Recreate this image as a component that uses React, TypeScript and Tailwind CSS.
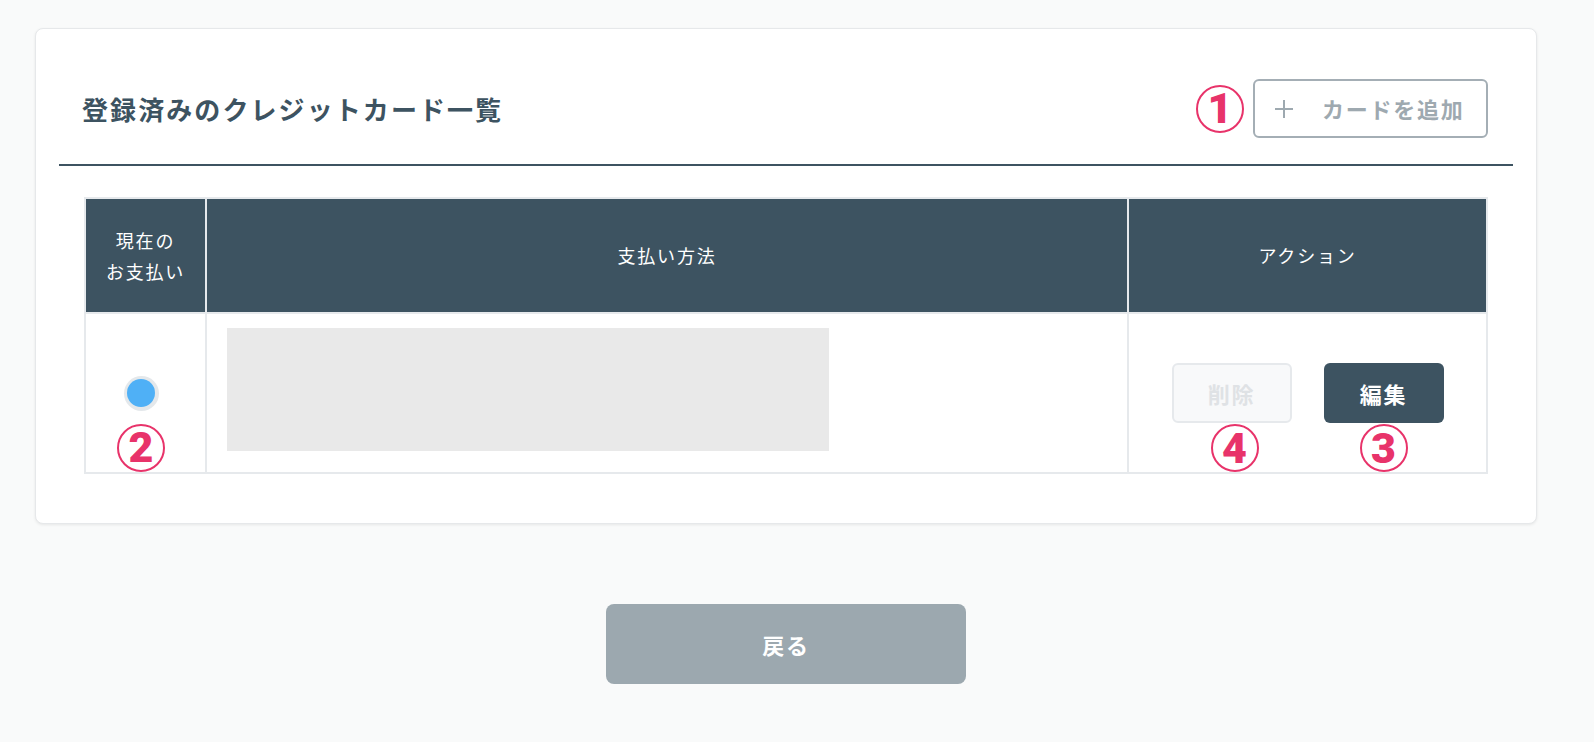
import React from 'react';

const jp = "font-['Noto_Sans_CJK_JP','Noto_Sans',sans-serif]";

function Marker({ n }: { n: string }) {
    return (
        <span className="inline-flex w-[48px] h-[48px] rounded-full border-2 border-[#e8336a] items-center justify-center text-[#e8336a] font-['Roboto',sans-serif] font-black text-[43px] leading-none">
            {n}
        </span>
    );
}

export default function App() {
    return (
        <div className={`min-h-screen bg-[#f9fafa] pt-[28px] pb-[59px] ${jp}`}>
            <div className="ml-[35px] w-[1502px]">
                {/* Card */}
                <div className="bg-white border border-[#e6e8ea] rounded-[8px] shadow-[0_1px_3px_rgba(0,0,0,0.08)] px-[23px] pb-[49px]">
                    <header className="flex items-center justify-between pt-[50px] pb-[26px] pl-[23px] pr-[25px]">
                        <h1 className="text-[26px] font-bold tracking-[0.08em] text-[#3d5361]">登録済みのクレジットカード一覧</h1>
                        <div className="flex items-center gap-[9px]">
                            <Marker n="1" />
                            <button className="w-[235px] h-[59px] border-2 border-[#a4aeb5] rounded-[6px] flex items-center pl-[19px] text-[#9ea9b0]">
                                <svg width="20" height="20" viewBox="0 0 20 20" fill="none" stroke="#9ea9b0" strokeWidth="2">
                                    <path d="M10 1v18M1 10h18" />
                                </svg>
                                <span className="ml-[28px] text-[22px] font-bold tracking-[0.08em]">カードを追加</span>
                            </button>
                        </div>
                    </header>
                    <div className="h-[2px] bg-[#3d5361]" />

                    {/* Table */}
                    <div className="mx-[25px] mt-[31px] grid grid-cols-[119px_1fr_357px] gap-[2px] p-[2px] bg-[#e6e9ec]">
                        <div className="h-[113px] bg-[#3d5361] flex items-center justify-center text-center text-white text-[18px] leading-[31px] tracking-[0.1em]">
                            現在の<br />お支払い
                        </div>
                        <div className="h-[113px] bg-[#3d5361] flex items-center justify-center text-white text-[18px] tracking-[0.1em]">支払い方法</div>
                        <div className="h-[113px] bg-[#3d5361] flex items-center justify-center text-white text-[18px] tracking-[0.1em]">アクション</div>

                        <div className="h-[158px] bg-white flex items-center justify-center">
                            <div className="relative mr-[9px]">
                                <div className="w-[35px] h-[35px] rounded-full bg-[#e4e8eb] flex items-center justify-center">
                                    <div className="w-[28px] h-[28px] rounded-full bg-[#4fb0f6]" />
                                </div>
                                <div className="absolute top-[48px] left-1/2 -translate-x-1/2">
                                    <Marker n="2" />
                                </div>
                            </div>
                        </div>
                        <div className="h-[158px] bg-white pl-[20px] pt-[14px]">
                            <div className="w-[602px] h-[123px] bg-[#e9e9e9]" />
                        </div>
                        <div className="h-[158px] bg-white flex items-center justify-center gap-[32px]">
                            <div className="relative">
                                <button className="w-[120px] h-[60px] bg-[#f8f9fa] border-2 border-[#e6e9ec] rounded-[6px] text-[22px] font-bold tracking-[0.08em] text-[#dfe2e5]">削除</button>
                                <div className="absolute top-[61px] left-1/2 -translate-x-1/2 ml-[3px]">
                                    <Marker n="4" />
                                </div>
                            </div>
                            <div className="relative">
                                <button className="w-[120px] h-[60px] bg-[#3d5361] rounded-[6px] text-[22px] font-bold tracking-[0.08em] text-white">編集</button>
                                <div className="absolute top-[61px] left-1/2 -translate-x-1/2">
                                    <Marker n="3" />
                                </div>
                            </div>
                        </div>
                    </div>
                </div>

                <div className="flex justify-center mt-[80px]">
                    <button className="w-[360px] h-[80px] bg-[#9ca8af] rounded-[8px] text-white text-[22px] font-bold tracking-[0.08em]">戻る</button>
                </div>
            </div>
        </div>
    );
}
